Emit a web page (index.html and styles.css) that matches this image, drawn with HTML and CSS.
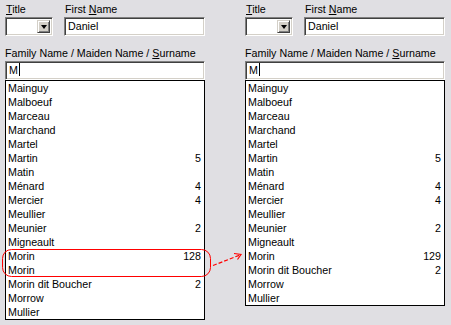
FILE: index.html
```html
<!DOCTYPE html>
<html>
<head>
<meta charset="utf-8">
<link rel="stylesheet" href="styles.css">
</head>
<body>
<div class="page">
  <div class="panel">
    <div class="top-row">
      <div class="field title-field">
        <div class="label"><u>T</u>itle</div>
        <div class="combo"><div class="combo-btn"><span class="tri"></span></div></div>
      </div>
      <div class="field first-field">
        <div class="label">First <u>N</u>ame</div>
        <div class="textbox">Daniel</div>
      </div>
    </div>
    <div class="label family-label">Family Name / Maiden Name / <u>S</u>urname</div>
    <div class="textbox">M<span class="caret"></span></div>
    <div class="list">
      <div class="row"><span>Mainguy</span></div>
      <div class="row"><span>Malboeuf</span></div>
      <div class="row"><span>Marceau</span></div>
      <div class="row"><span>Marchand</span></div>
      <div class="row"><span>Martel</span></div>
      <div class="row"><span>Martin</span><span>5</span></div>
      <div class="row"><span>Matin</span></div>
      <div class="row"><span>Ménard</span><span>4</span></div>
      <div class="row"><span>Mercier</span><span>4</span></div>
      <div class="row"><span>Meullier</span></div>
      <div class="row"><span>Meunier</span><span>2</span></div>
      <div class="row"><span>Migneault</span></div>
      <div class="row"><span>Morin</span><span>128</span></div>
      <div class="row"><span>Morin</span></div>
      <div class="row"><span>Morin dit Boucher</span><span>2</span></div>
      <div class="row"><span>Morrow</span></div>
      <div class="row"><span>Mullier</span></div>
    </div>
  </div>
  <div class="panel">
    <div class="top-row">
      <div class="field title-field">
        <div class="label"><u>T</u>itle</div>
        <div class="combo"><div class="combo-btn"><span class="tri"></span></div></div>
      </div>
      <div class="field first-field">
        <div class="label">First <u>N</u>ame</div>
        <div class="textbox">Daniel</div>
      </div>
    </div>
    <div class="label family-label">Family Name / Maiden Name / <u>S</u>urname</div>
    <div class="textbox">M<span class="caret"></span></div>
    <div class="list">
      <div class="row"><span>Mainguy</span></div>
      <div class="row"><span>Malboeuf</span></div>
      <div class="row"><span>Marceau</span></div>
      <div class="row"><span>Marchand</span></div>
      <div class="row"><span>Martel</span></div>
      <div class="row"><span>Martin</span><span>5</span></div>
      <div class="row"><span>Matin</span></div>
      <div class="row"><span>Ménard</span><span>4</span></div>
      <div class="row"><span>Mercier</span><span>4</span></div>
      <div class="row"><span>Meullier</span></div>
      <div class="row"><span>Meunier</span><span>2</span></div>
      <div class="row"><span>Migneault</span></div>
      <div class="row"><span>Morin</span><span>129</span></div>
      <div class="row"><span>Morin dit Boucher</span><span>2</span></div>
      <div class="row"><span>Morrow</span></div>
      <div class="row"><span>Mullier</span></div>
    </div>
  </div>
  <svg class="annot" width="451" height="325" viewBox="0 0 451 325">
    <rect x="2.5" y="249.5" width="208" height="27" rx="9" ry="9" fill="none" stroke="#ff0000" stroke-width="1"/>
    <path d="M213 265.5 L240 255" fill="none" stroke="#ff0000" stroke-width="1.2" stroke-dasharray="4 2"/>
    <path d="M234 253.5 L241 254.5 L237.5 259.5" fill="none" stroke="#ff0000" stroke-width="1.2"/>
  </svg>
</div>
</body>
</html>
```
FILE: styles.css
```css
html, body {
  margin: 0;
  padding: 0;
  background: #e0dfe3;
}
body {
  font-family: "Liberation Sans", Arial, sans-serif;
  font-size: 10.7px;
  color: #000;
}
.page {
  position: relative;
  width: 451px;
  height: 325px;
  display: flex;
  gap: 40px;
  padding: 3px 0 0 5px;
  box-sizing: border-box;
}
.panel {
  width: 200px;
  display: flex;
  flex-direction: column;
}
.top-row {
  display: flex;
  gap: 11px;
}
.field {
  display: flex;
  flex-direction: column;
}
.title-field {
  width: 48px;
}
.first-field {
  flex: 1;
}
.label {
  height: 13px;
  line-height: 13px;
  padding-left: 1px;
  white-space: nowrap;
}
.family-label {
  margin-top: 11px;
  padding-left: 0;
}
.combo, .textbox {
  box-sizing: border-box;
  height: 19px;
  margin-top: 1px;
  background: #fff;
  border-top: 1px solid #808080;
  border-left: 1px solid #808080;
  border-right: 1px solid #ffffff;
  border-bottom: 1px solid #ffffff;
  box-shadow: inset 1px 1px 0 #404040, inset -1px -1px 0 #d4d0c8;
}
.textbox {
  padding-left: 3px;
  line-height: 17px;
  position: relative;
}
.caret {
  display: inline-block;
  width: 1px;
  height: 13px;
  background: #000;
  vertical-align: -2px;
  margin-left: 1px;
}
.combo {
  display: flex;
  justify-content: flex-end;
  padding: 2px;
}
.combo-btn {
  width: 13px;
  height: 13px;
  background: #d4d0c8;
  box-sizing: border-box;
  border-top: 1px solid #d4d0c8;
  border-left: 1px solid #d4d0c8;
  border-right: 1px solid #404040;
  border-bottom: 1px solid #404040;
  box-shadow: inset 1px 1px 0 #ffffff, inset -1px -1px 0 #808080;
  display: flex;
  align-items: center;
  justify-content: center;
}
.tri {
  width: 0;
  height: 0;
  border-left: 3.5px solid transparent;
  border-right: 3.5px solid transparent;
  border-top: 4px solid #000;
  margin-top: 1px;
}
.list {
  background: #fff;
  border: 1px solid #000;
  box-sizing: border-box;
  width: 200px;
}
.row {
  height: 14px;
  line-height: 14px;
  display: flex;
  justify-content: space-between;
  padding: 0 3px 0 2px;
  white-space: nowrap;
}
.annot {
  position: absolute;
  left: 0;
  top: 0;
  pointer-events: none;
}
```
